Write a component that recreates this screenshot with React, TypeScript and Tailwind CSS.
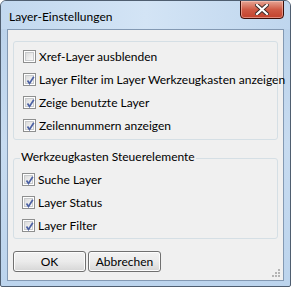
import React from "react"

const font = { fontFamily: 'Lato, "Noto Sans", sans-serif' }

function CheckBox({ checked }: { checked: boolean }) {
  return (
    <div className="w-[13px] h-[13px] border border-[#8e8f8f] bg-white p-[1px] shrink-0">
      <div className="w-full h-full border border-[#c8cacc] bg-gradient-to-br from-[#dcdcdc] to-[#fafafa] relative">
        {checked && (
          <svg width="11" height="11" viewBox="0 0 11 11" className="absolute left-[-1px] top-[-1px]">
            <path d="M2.5 5.5 L4.5 8.5 L8.8 1.8" stroke="#4d62a4" strokeWidth="1.7" fill="none" />
          </svg>
        )}
      </div>
    </div>
  )
}

function Row({ label, checked }: { label: string; checked: boolean }) {
  return (
    <div className="flex items-center gap-[3px] h-[23px]">
      <CheckBox checked={checked} />
      <span className="text-[12px] text-black leading-none whitespace-nowrap">{label}</span>
    </div>
  )
}

function Btn({ label }: { label: string }) {
  return (
    <div className="w-[73px] h-[21px] rounded-[3px] border border-[#707070] bg-gradient-to-b from-[#f2f2f2] via-[#ebebeb] to-[#d6d6d6] flex items-center justify-center text-[12px] text-black shadow-[inset_0_0_0_1px_#fcfcfc]">
      {label}
    </div>
  )
}

export default function App() {
  return (
    <div className="w-[292px] h-[288px] bg-white" style={font}>
      <div className="w-[291px] h-[287px] rounded-t-[6px] rounded-b-[2px] border border-[#4f5e70] bg-gradient-to-b from-[#b9d1ea] via-[#c7dbf0] to-[#bcd4ed] flex flex-col relative overflow-hidden">
        {/* title bar */}
        <div className="h-[28px] flex items-center pl-[8px] bg-gradient-to-r from-[#c2d8ef] via-[#d3e4f5] to-[#bfd6ee]">
          <span className="text-[12px] text-black leading-none mt-[3px]">Layer-Einstellungen</span>
        </div>
        <div className="absolute right-[6px] top-[-1px] w-[44px] h-[19px] rounded-b-[4px] border border-[#3c0d07] bg-gradient-to-b from-[#e5a494] via-[#cf5a45] to-[#c2412c] flex items-center justify-center shadow-[inset_0_0_0_1px_rgba(255,210,200,0.5)]">
          <svg width="14" height="11" viewBox="0 0 14 11">
            <path d="M2 1 L12 10 M12 1 L2 10" stroke="#3a2a28" strokeWidth="4" strokeLinecap="square" />
            <path d="M2 1 L12 10 M12 1 L2 10" stroke="#ffffff" strokeWidth="2.2" strokeLinecap="square" />
          </svg>
        </div>

        {/* client area */}
        <div className="mx-[6px] h-[252px] border border-[#8399b3] bg-[#f0f0f0] relative px-[5px] pt-[11px]">
          <div className="border border-[#d5dfe5] rounded-[3px] h-[99px] pl-[9px] pt-[3px]">
            <Row label="Xref-Layer ausblenden" checked={false} />
            <Row label="Layer Filter im Layer Werkzeugkasten anzeigen" checked />
            <Row label="Zeige benutzte Layer" checked />
            <Row label="Zeilennummern anzeigen" checked />
          </div>

          <div className="mt-[11px] h-[88px] relative">
            <div className="absolute inset-x-0 top-[7px] bottom-0 border border-[#d5dfe5] rounded-[3px]" />
            <span className="absolute left-[7px] top-0 px-[1px] bg-[#f0f0f0] text-[12px] leading-none text-black">
              Werkzeugkasten Steuerelemente
            </span>
            <div className="relative pt-[17px] pl-[9px]">
              <Row label="Suche Layer" checked />
              <Row label="Layer Status" checked />
              <Row label="Layer Filter" checked />
            </div>
          </div>

          <div className="flex gap-[2px] mt-[12px]">
            <Btn label="OK" />
            <Btn label="Abbrechen" />
          </div>

          <svg width="10" height="10" viewBox="0 0 10 10" className="absolute right-[2px] bottom-[2px]">
            {[
              [7, 1],
              [7, 4],
              [4, 4],
              [7, 7],
              [4, 7],
              [1, 7],
            ].map(([x, y], i) => (
              <rect key={i} x={x} y={y} width="2" height="2" fill="#b4b4b4" />
            ))}
          </svg>
        </div>
      </div>
    </div>
  )
}
